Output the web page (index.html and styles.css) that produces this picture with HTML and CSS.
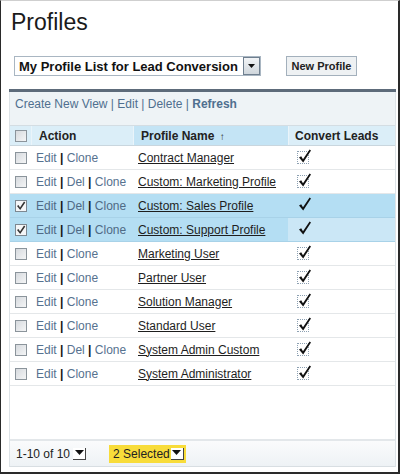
FILE: index.html
```html
<!DOCTYPE html>
<html>
<head>
<meta charset="utf-8">
<link rel="stylesheet" href="styles.css">
</head>
<body>
<div class="frame">
  <h1 class="title">Profiles</h1>
  <div class="controls">
    <div class="select">
      <span class="select-text">My Profile List for Lead Conversion</span>
      <span class="select-btn"><svg width="7" height="4" viewBox="0 0 7 4"><path d="M0 0 H7 L3.5 4 Z" fill="#111"/></svg></span>
    </div>
    <button class="btn">New Profile</button>
  </div>
  <div class="panel">
    <div class="bar"></div>
    <div class="links">
      <a>Create New View</a> | <a>Edit</a> | <a>Delete</a> | <a class="b">Refresh</a>
    </div>
    <div class="table">
      <div class="row head">
        <div class="c c0"><span class="cb"></span></div>
        <div class="c c1">Action</div>
        <div class="c c2 sorted"><span>Profile Name <span class="arr">↑</span></span></div>
        <div class="c c3">Convert Leads</div>
      </div>

      <div class="row">
        <div class="c c0"><span class="cb"></span></div>
        <div class="c c1"><span><a>Edit</a> <b>|</b> <a>Clone</a></span></div>
        <div class="c c2"><u>Contract Manager</u></div>
        <div class="c c3"><span class="ck"><svg width="14" height="16" viewBox="0 0 14 16"><path d="M1 9.5 L3.2 8.3 L5 11.2 L11.6 1.5 L13 2.4 L5.2 14.5 Z" fill="#111"/></svg></span></div>
      </div>
      <div class="row">
        <div class="c c0"><span class="cb"></span></div>
        <div class="c c1"><span><a>Edit</a> <b>|</b> <a>Del</a> <b>|</b> <a>Clone</a></span></div>
        <div class="c c2"><u>Custom: Marketing Profile</u></div>
        <div class="c c3"><span class="ck"><svg width="14" height="16" viewBox="0 0 14 16"><path d="M1 9.5 L3.2 8.3 L5 11.2 L11.6 1.5 L13 2.4 L5.2 14.5 Z" fill="#111"/></svg></span></div>
      </div>
      <div class="row sel">
        <div class="c c0"><span class="cb on"><svg width="10" height="10" viewBox="0 0 10 10"><path d="M1 5 L2.5 4 L4 6.5 L8 0.5 L9.3 1.5 L4.2 9 Z" fill="#333"/></svg></span></div>
        <div class="c c1"><span><a>Edit</a> <b>|</b> <a>Del</a> <b>|</b> <a>Clone</a></span></div>
        <div class="c c2"><u>Custom: Sales Profile</u></div>
        <div class="c c3"><span class="ck nb"><svg width="14" height="16" viewBox="0 0 14 16"><path d="M1 9.5 L3.2 8.3 L5 11.2 L11.6 1.5 L13 2.4 L5.2 14.5 Z" fill="#111"/></svg></span></div>
      </div>
      <div class="row sel">
        <div class="c c0"><span class="cb on"><svg width="10" height="10" viewBox="0 0 10 10"><path d="M1 5 L2.5 4 L4 6.5 L8 0.5 L9.3 1.5 L4.2 9 Z" fill="#333"/></svg></span></div>
        <div class="c c1"><span><a>Edit</a> <b>|</b> <a>Del</a> <b>|</b> <a>Clone</a></span></div>
        <div class="c c2"><u>Custom: Support Profile</u></div>
        <div class="c c3 hov"><span class="ck nb"><svg width="14" height="16" viewBox="0 0 14 16"><path d="M1 9.5 L3.2 8.3 L5 11.2 L11.6 1.5 L13 2.4 L5.2 14.5 Z" fill="#111"/></svg></span></div>
      </div>
      <div class="row">
        <div class="c c0"><span class="cb"></span></div>
        <div class="c c1"><span><a>Edit</a> <b>|</b> <a>Clone</a></span></div>
        <div class="c c2"><u>Marketing User</u></div>
        <div class="c c3"><span class="ck"><svg width="14" height="16" viewBox="0 0 14 16"><path d="M1 9.5 L3.2 8.3 L5 11.2 L11.6 1.5 L13 2.4 L5.2 14.5 Z" fill="#111"/></svg></span></div>
      </div>
      <div class="row">
        <div class="c c0"><span class="cb"></span></div>
        <div class="c c1"><span><a>Edit</a> <b>|</b> <a>Clone</a></span></div>
        <div class="c c2"><u>Partner User</u></div>
        <div class="c c3"><span class="ck"><svg width="14" height="16" viewBox="0 0 14 16"><path d="M1 9.5 L3.2 8.3 L5 11.2 L11.6 1.5 L13 2.4 L5.2 14.5 Z" fill="#111"/></svg></span></div>
      </div>
      <div class="row">
        <div class="c c0"><span class="cb"></span></div>
        <div class="c c1"><span><a>Edit</a> <b>|</b> <a>Clone</a></span></div>
        <div class="c c2"><u>Solution Manager</u></div>
        <div class="c c3"><span class="ck"><svg width="14" height="16" viewBox="0 0 14 16"><path d="M1 9.5 L3.2 8.3 L5 11.2 L11.6 1.5 L13 2.4 L5.2 14.5 Z" fill="#111"/></svg></span></div>
      </div>
      <div class="row">
        <div class="c c0"><span class="cb"></span></div>
        <div class="c c1"><span><a>Edit</a> <b>|</b> <a>Clone</a></span></div>
        <div class="c c2"><u>Standard User</u></div>
        <div class="c c3"><span class="ck"><svg width="14" height="16" viewBox="0 0 14 16"><path d="M1 9.5 L3.2 8.3 L5 11.2 L11.6 1.5 L13 2.4 L5.2 14.5 Z" fill="#111"/></svg></span></div>
      </div>
      <div class="row">
        <div class="c c0"><span class="cb"></span></div>
        <div class="c c1"><span><a>Edit</a> <b>|</b> <a>Del</a> <b>|</b> <a>Clone</a></span></div>
        <div class="c c2"><u>System Admin Custom</u></div>
        <div class="c c3"><span class="ck"><svg width="14" height="16" viewBox="0 0 14 16"><path d="M1 9.5 L3.2 8.3 L5 11.2 L11.6 1.5 L13 2.4 L5.2 14.5 Z" fill="#111"/></svg></span></div>
      </div>
      <div class="row">
        <div class="c c0"><span class="cb"></span></div>
        <div class="c c1"><span><a>Edit</a> <b>|</b> <a>Clone</a></span></div>
        <div class="c c2"><u>System Administrator</u></div>
        <div class="c c3"><span class="ck"><svg width="14" height="16" viewBox="0 0 14 16"><path d="M1 9.5 L3.2 8.3 L5 11.2 L11.6 1.5 L13 2.4 L5.2 14.5 Z" fill="#111"/></svg></span></div>
      </div>
    </div>
    <div class="spacer"></div>
    <div class="footer">
      <span class="count">1-10 of 10</span>
      <span class="mini"><svg width="9" height="6" viewBox="0 0 9 6"><path d="M0 0 H9 L4.5 5 Z" fill="#111"/></svg></span>
      <span class="selected">2 Selected <span class="mini y"><svg width="9" height="6" viewBox="0 0 9 6"><path d="M0 0 H9 L4.5 5 Z" fill="#111"/></svg></span></span>
    </div>
  </div>
</div>
</body>
</html>
```

FILE: styles.css
```css
* { box-sizing: border-box; }
html, body { margin: 0; padding: 0; background: #fff; }
body {
  font-family: "Liberation Sans", Arial, sans-serif;
  color: #222;
  width: 400px;
  height: 474px;
  overflow: hidden;
}
.frame {
  width: 400px;
  height: 474px;
  border-left: 1px solid #2a2a2a;
  border-right: 2px solid #2a2a2a;
  border-bottom: 2px solid #2a2a2a;
  border-top: 1px solid #cfcfcf;
  display: flex;
  flex-direction: column;
}
.title {
  font-size: 23px;
  font-weight: normal;
  margin: 7px 0 0 10px;
  line-height: 28px;
  color: #1a1a1a;
}
.controls {
  display: flex;
  align-items: center;
  margin: 20px 0 0 13px;
  height: 20px;
}
.select {
  width: 247px;
  height: 20px;
  border: 1px solid #a9b6c2;
  display: flex;
  align-items: center;
  justify-content: space-between;
  padding-left: 4px;
  background: #fff;
}
.select-text {
  font-weight: bold;
  font-size: 13px;
  color: #111;
  white-space: nowrap;
}
.select-btn {
  width: 17px;
  height: 18px;
  border: 1px solid #6f7f8f;
  background: linear-gradient(#f2f4f6, #cfd6dc);
  display: flex;
  align-items: center;
  justify-content: center;
}
.btn {
  margin-left: 25px;
  width: 71px;
  height: 20px;
  font-family: "Liberation Sans", Arial, sans-serif;
  font-weight: bold;
  font-size: 11px;
  color: #222;
  border: 1px solid #a3b0bc;
  background: #eef1f3;
  padding: 0;
}
.panel {
  margin: 13px 2px 5px 8px;
  flex: 1;
  display: flex;
  flex-direction: column;
  border-left: 1px solid #dde3e7;
  border-right: 1px solid #dde3e7;
  border-bottom: 1px solid #d8dee2;
}
.bar {
  height: 3px;
  background: #5d6b7a;
  margin: 0 -1px;
}
.links {
  height: 33px;
  background: #eef3f6;
  font-size: 12px;
  color: #4f6f8f;
  padding: 5px 0 0 5px;
}
.links a { color: #4f6f8f; }
.links .b { font-weight: bold; }
.table { background: #fff; }
.row {
  display: flex;
  height: 24px;
  border-bottom: 1px solid #e4e7e9;
  font-size: 12px;
  align-items: stretch;
}
.row.head {
  height: 21px;
  background: #dbeef8;
  border-top: 1px solid #d4dde3;
  border-bottom: 1px solid #c9d6de;
  font-weight: bold;
  color: #222;
}
.c {
  display: flex;
  align-items: center;
  white-space: nowrap;
}
.c0 { width: 21px; padding-left: 5px; }
.c1 { width: 102px; padding-left: 5px; color: #4f6f8f; }
.c2 { width: 155px; padding-left: 5px; }
.c3 { flex: 1; padding-left: 9px; }
.head .c1 { padding-left: 7px; color: #222; border-left: 1px solid #eaf4fa; }
.head .c2 { padding-left: 7px; border-left: 1px solid #eaf4fa; }
.head .c3 { padding-left: 6px; border-left: 1px solid #eaf4fa; }
.head .sorted { background: #c4e4f5; }
.arr { font-size: 10px; margin-left: 2px; }
.c1 a { color: #56728f; }
.c1 b { color: #111; }
.c2 u { color: #1e1e1e; }
.cb {
  width: 12px;
  height: 12px;
  border: 1px solid #8b949b;
  background: linear-gradient(135deg, #d6dade, #f4f5f6);
  display: flex;
  align-items: center;
  justify-content: center;
}
.cb.on { background: #f4f6f8; border-color: #7d8891; }
.ck {
  width: 12px;
  height: 13px;
  border: 1px dotted #8da1b3;
  position: relative;
  display: block;
}
.ck.nb { border-color: transparent; }
.ck svg { position: absolute; left: 0; top: -4px; }
.row.sel { background: #b4def3; border-bottom-color: #a8d2e8; }
.row.sel .c1 a { color: #4f6a85; }
.hov { background: #cbe7f6; }
.spacer { flex: 1; background: #fff; }
.footer {
  height: 27px;
  border-top: 2px solid #e3e7ea;
  background: linear-gradient(#fafbfc, #eef2f5);
  display: flex;
  align-items: center;
  font-size: 12px;
  color: #222;
  padding-left: 6px;
}
.count { color: #222; }
.mini {
  width: 13px;
  height: 12px;
  border-right: 1px solid #444;
  border-bottom: 1px solid #444;
  background: #fff;
  display: inline-flex;
  align-items: center;
  justify-content: center;
  margin-left: 3px;
}
.selected {
  margin-left: 23px;
  background: #f8dc3a;
  height: 18px;
  padding: 0 2px 0 4px;
  display: flex;
  align-items: center;
  color: #222;
}
.mini.y { margin-left: 1px; }
```
